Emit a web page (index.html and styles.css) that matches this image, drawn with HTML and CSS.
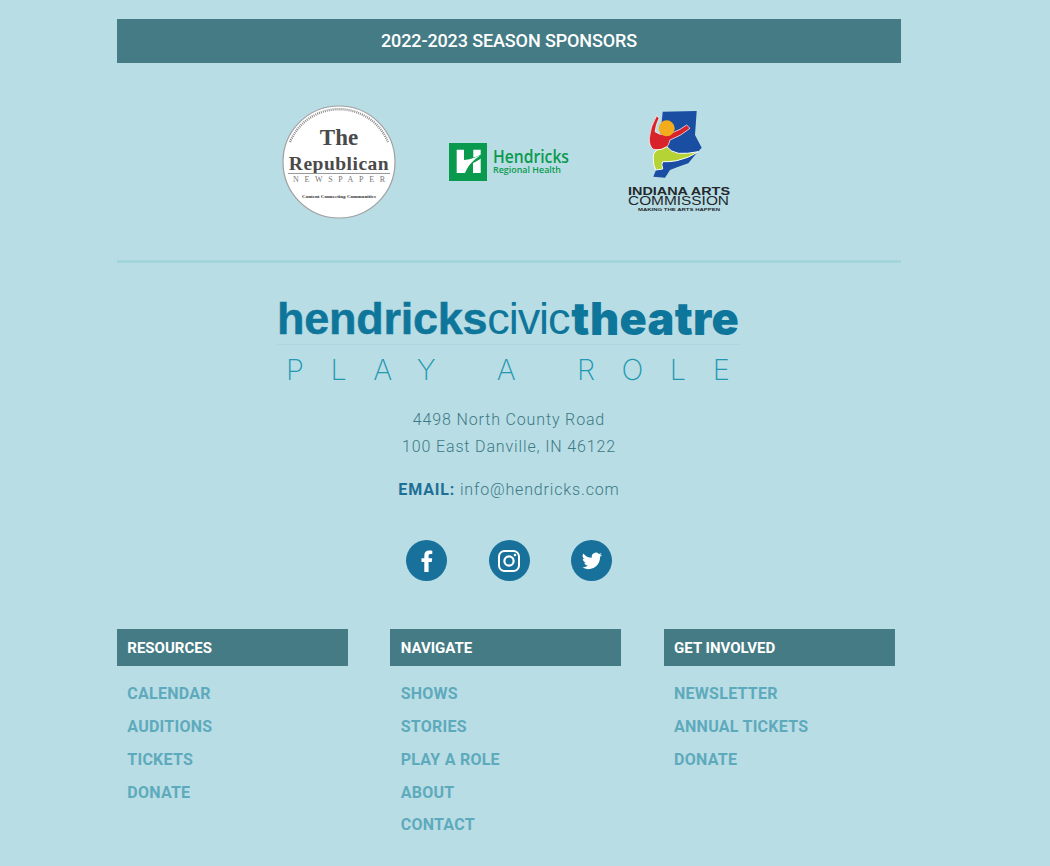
FILE: index.html
```html
<!DOCTYPE html>
<html lang="en">
<head>
<meta charset="utf-8">
<title>Hendricks Civic Theatre</title>
<link rel="stylesheet" href="styles.css">
</head>
<body>
<main class="page">
  <h2 class="banner">2022-2023 SEASON SPONSORS</h2>
  <div class="sponsors">
    <svg class="logo-republican" width="116" height="116" viewBox="0 0 116 116">
      <circle cx="58" cy="57" r="56" fill="#fff" stroke="#a0a0a0" stroke-width="1.2"/>
      <path d="M9 37A53 53 0 0 1 107 37" fill="none" stroke="#8a8a8a" stroke-width="2.400" stroke-dasharray="1 1"/>
      <text x="58" y="40" class="rep-the">The</text>
      <text x="58" y="65" class="rep-name">Republican</text>
      <rect x="7" y="68" width="102" height="1" fill="#999"/>
      <text x="12" y="77" class="rep-news" textLength="92">NEWSPAPER</text>
      <text x="21" y="93" class="rep-tag" textLength="74" lengthAdjust="spacingAndGlyphs">Content Connecting Communities</text>
    </svg>
    <svg class="logo-hendricks" width="130" height="40" viewBox="0 0 130 40">
      <rect x="0" y="1" width="38" height="38" fill="#0a9a4e"/>
      <path d="M7.700 7.700H15V18C20 17.500 27 16 33 12C28 16.500 21 19 16 31H7.700Z" fill="#fff"/>
      <path d="M24.300 7.700H31.700V12.500C29 14 27 15 24.300 15.500Z" fill="#fff"/>
      <path d="M24 21C27 19.500 30 18 31.700 16.500V31H24Z" fill="#fff"/>
      <text x="44" y="21" class="hend-name" textLength="76" lengthAdjust="spacingAndGlyphs">Hendricks</text>
      <text x="44" y="30.500" class="hend-sub" textLength="68" lengthAdjust="spacingAndGlyphs">Regional Health</text>
    </svg>
    <svg class="logo-iac" width="106" height="103" viewBox="0 0 106 103">
      <path d="M35.700 2.700L69.700 2L68 26L74.700 38.700L68 46L61.300 54.300L51.300 57.700L43 61L38 68.700L26.300 67.700L30.300 57.700Z" fill="#1a4ea3"/>
      <path d="M29.700 6.700Q23 18 22.300 29.300Q22 37 26.300 40.300Q33 42 39 39.300Q42 36 43 31Q54 27 63 19.300L59.700 16Q53 21 46.300 23.300Q39 26 33 25.300L28 22.700Q29 15 32 9.300Z" fill="#d8232a" stroke="#fff" stroke-width=".7"/>
      <circle cx="39.700" cy="19.300" r="8" fill="#f2ac1c"/>
      <path d="M29.700 41Q25 45 26.300 49.300Q26 56 28.700 61L35.700 60Q34 55 35.700 52.700Q43 53 49.700 51.700Q62 49 71.300 42.700Q60 45 51.300 44.300Q44 43 39.700 37.700Q35 41 29.700 41Z" fill="#b5d334" stroke="#fff" stroke-width="1"/>
      <text x="1" y="86" class="iac-a" textLength="102" lengthAdjust="spacingAndGlyphs">INDIANA ARTS</text>
      <text x="1" y="96" class="iac-b" textLength="101" lengthAdjust="spacingAndGlyphs">COMMISSION</text>
      <text x="11" y="101.600" class="iac-c" textLength="82" lengthAdjust="spacingAndGlyphs">MAKING THE ARTS HAPPEN</text>
    </svg>
  </div>
  <hr class="rule">
  <div class="brand">
    <div class="wordmark"><span class="w-bold">hendricks</span><span class="w-light">civic</span><span class="w-black">theatre</span></div>
    <div class="tagline">PLAY A ROLE</div>
  </div>
  <p class="address">4498 North County Road<br>100 East Danville, IN 46122</p>
  <p class="email"><strong>EMAIL:</strong> info@hendricks.com</p>
  <div class="social">
    <a class="social-btn" href="#" aria-label="Facebook">
      <svg width="12" height="22" viewBox="0 0 12 22"><path d="M3.300 22V12H.500V8.200H3.300V5.600C3.300 2.200 5.200.5 8 .5c1.300 0 2.500.1 3.300.2v3.400H9.400C7.900 4.100 7.600 4.800 7.600 5.900v2.300h3.600L10.700 12H7.600V22z" fill="#fff"/></svg>
    </a>
    <a class="social-btn" href="#" aria-label="Instagram">
      <svg width="24" height="24" viewBox="0 0 24 24" fill="none" stroke="#fff"><rect x="2" y="2" width="20" height="20" rx="5.500" stroke-width="2"/><circle cx="12" cy="12" r="4.600" stroke-width="2.200"/><circle cx="18" cy="6" r="1.300" fill="#fff" stroke="none"/></svg>
    </a>
    <a class="social-btn" href="#" aria-label="Twitter">
      <svg width="22" height="22" viewBox="0 0 24 24"><path d="M23 5.100c-.8.400-1.700.6-2.600.7.900-.6 1.700-1.400 2-2.500-.9.500-1.900.9-2.900 1.100A4.500 4.500 0 0 0 11.800 8.500 12.900 12.900 0 0 1 2.500 3.700a4.500 4.500 0 0 0 1.400 6.100c-.7 0-1.400-.2-2-.6 0 2.200 1.500 4.100 3.600 4.500-.7.200-1.400.2-2 .1.600 1.800 2.300 3.100 4.300 3.200A9.100 9.100 0 0 1 1 18.900a12.800 12.800 0 0 0 7 2c8.400 0 13.100-7.100 12.800-13.500.9-.6 1.600-1.400 2.200-2.300z" fill="#fff"/></svg>
    </a>
  </div>
  <div class="footer-cols">
    <section class="col">
      <h3 class="col-title">RESOURCES</h3>
      <ul class="links">
        <li><a href="#">CALENDAR</a></li>
        <li><a href="#">AUDITIONS</a></li>
        <li><a href="#">TICKETS</a></li>
        <li><a href="#">DONATE</a></li>
      </ul>
    </section>
    <section class="col">
      <h3 class="col-title">NAVIGATE</h3>
      <ul class="links">
        <li><a href="#">SHOWS</a></li>
        <li><a href="#">STORIES</a></li>
        <li><a href="#">PLAY A ROLE</a></li>
        <li><a href="#">ABOUT</a></li>
        <li><a href="#">CONTACT</a></li>
      </ul>
    </section>
    <section class="col">
      <h3 class="col-title">GET INVOLVED</h3>
      <ul class="links">
        <li><a href="#">NEWSLETTER</a></li>
        <li><a href="#">ANNUAL TICKETS</a></li>
        <li><a href="#">DONATE</a></li>
      </ul>
    </section>
  </div>
</main>
</body>
</html>
```
FILE: styles.css
```css
* { box-sizing: border-box; }
html, body { margin: 0; height: 100%; }
body {
  background: #b9dde4;
  font-family: Roboto, "Liberation Sans", sans-serif;
  overflow: hidden;
}
.page {
  width: 784px;
  margin-left: 117px;
  padding-top: 19px;
}
.banner {
  margin: 0;
  height: 44px;
  background: #447b84;
  color: #fff;
  font-size: 18px;
  font-weight: 500;
  line-height: 44px;
  letter-spacing: -.12px;
  text-align: center;
}
.sponsors {
  display: flex;
  align-items: flex-start;
  margin-top: 42px;
  height: 116px;
  padding-left: 164px;
}
.logo-republican { flex: none; }
.logo-hendricks { flex: none; margin: 37px 0 0 52px; }
.logo-iac { flex: none; margin: 4px 0 0 48px; }
.rep-the, .rep-name {
  font-family: "Liberation Serif", serif;
  font-weight: 700;
  text-anchor: middle;
  fill: #4a4a4a;
}
.rep-the { font-size: 23px; }
.rep-name { font-size: 19.500px; letter-spacing: .5px; }
.rep-news {
  font-family: "Liberation Serif", serif;
  font-size: 8px;
  fill: #777;
}
.rep-tag {
  font-family: "Liberation Serif", serif;
  font-size: 5px;
  font-weight: 700;
  fill: #333;
}
.hend-name {
  font-family: "Open Sans", sans-serif;
  font-size: 18px;
  font-weight: 600;
  fill: #0a9a4e;
}
.hend-sub {
  font-family: "Open Sans", sans-serif;
  font-size: 8.600px;
  font-weight: 600;
  fill: #0a9a4e;
}
.iac-a, .iac-b, .iac-c {
  font-family: "Liberation Sans", sans-serif;
  fill: #23282c;
}
.iac-a { font-size: 11px; font-weight: 700; }
.iac-b { font-size: 12px; }
.iac-c { font-size: 4px; font-weight: 700; }
.rule {
  margin: 39px 0 0;
  height: 3px;
  border: 0;
  background: #a3d6db;
}
.brand {
  width: 464px;
  margin: 33px 0 0 160px;
}
.wordmark {
  display: flex;
  height: 49px;
  border-bottom: 1px solid #aed6de;
  font-family: "Liberation Sans", sans-serif;
  font-size: 45px;
  line-height: 46px;
  color: #0f769b;
  white-space: nowrap;
}
.w-bold { font-weight: 700; letter-spacing: -.25px; -webkit-text-stroke: .5px #0f769b; }
.w-light { font-weight: 400; letter-spacing: -1.100px; }
.w-black { font-family: Inter, sans-serif; font-weight: 900; letter-spacing: .35px; margin-left: 2px; }
.tagline {
  margin-top: 12px;
  padding-left: 9px;
  font-family: Inter, sans-serif;
  font-weight: 200;
  font-size: 29px;
  line-height: 25px;
  letter-spacing: 26.500px;
  white-space: nowrap;
  color: #2398b2;
}
.address {
  margin: 24px 0 0;
  font-size: 16px;
  font-weight: 300;
  line-height: 27px;
  letter-spacing: .85px;
  text-align: center;
  color: #3b7a87;
}
.email {
  margin: 16px 0 0;
  font-size: 16px;
  font-weight: 300;
  line-height: 27px;
  letter-spacing: .85px;
  text-align: center;
  color: #3b7a87;
}
.email strong { font-weight: 700; color: #1d6f96; }
.social {
  display: flex;
  justify-content: center;
  gap: 41.500px;
  margin-top: 37px;
}
.social-btn {
  display: flex;
  align-items: center;
  justify-content: center;
  width: 41px;
  height: 41px;
  border-radius: 50%;
  background: #17719b;
}
.footer-cols {
  display: grid;
  grid-template-columns: repeat(3, 231px);
  column-gap: 42.400px;
  margin-top: 48px;
}
.col-title {
  margin: 0;
  height: 37px;
  padding-left: 10.300px;
  background: #447b84;
  color: #fff;
  font-size: 15px;
  font-weight: 700;
  line-height: 38px;
}
.links {
  list-style: none;
  margin: 12.200px 0 0;
  padding: 0 0 0 10.300px;
}
.links li {
  height: 32.800px;
  font-size: 16px;
  font-weight: 700;
  line-height: 32px;
  letter-spacing: .25px;
}
.links a {
  color: #5eaabd;
  text-decoration: none;
}
```
